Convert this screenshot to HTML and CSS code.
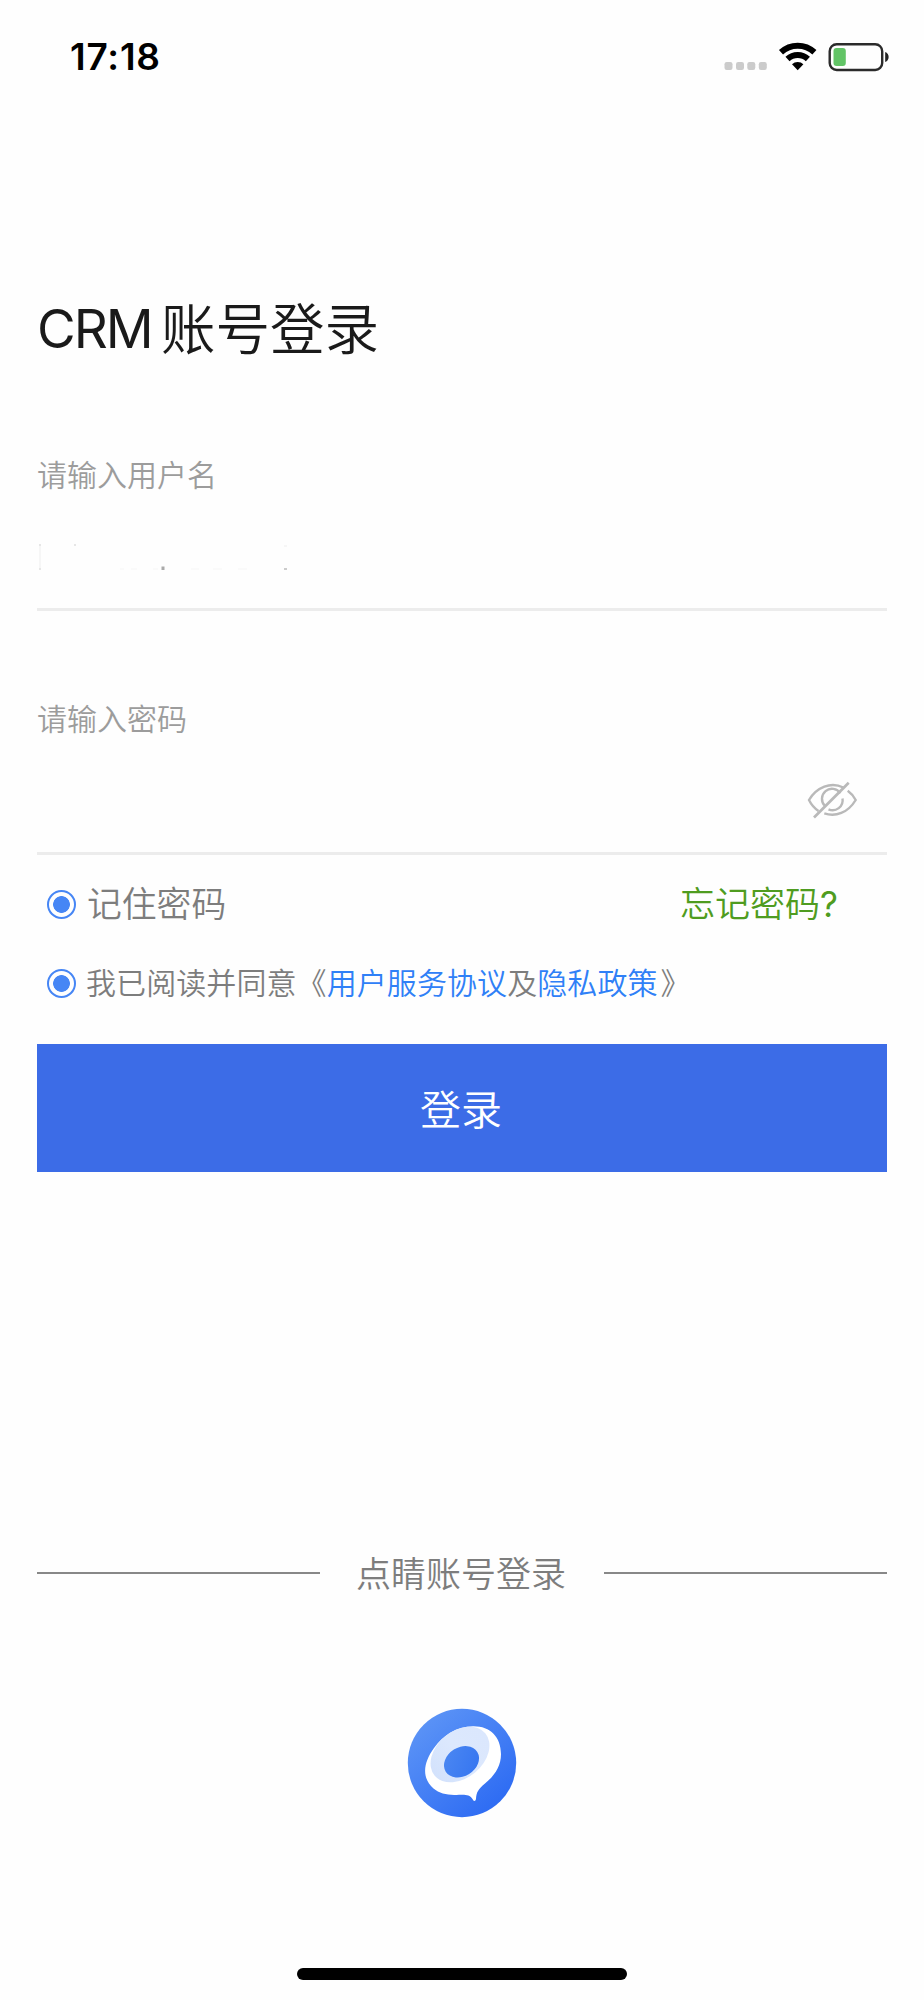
FILE: index.html
```html
<!DOCTYPE html>
<html lang="zh-CN">
<head>
<meta charset="utf-8">
<meta name="viewport" content="width=device-width, initial-scale=1">
<title>CRM账号登录</title>
<link rel="stylesheet" href="styles.css">
</head>
<body>
<div class="screen">
  <header class="status">
    <span class="time">17:18</span>
    <svg class="status-icons" width="170" height="40" viewBox="0 0 170 40">
      <g fill="#cbcbcb">
        <rect x="4.5" y="22" width="8" height="8" rx="2.2"/>
        <rect x="16" y="22" width="8" height="8" rx="2.2"/>
        <rect x="27.3" y="22" width="8" height="8" rx="2.2"/>
        <rect x="38.8" y="22" width="8" height="8" rx="2.2"/>
      </g>
      <g fill="none" stroke="#000" stroke-width="6">
        <path d="M61 12.300a24.500 24.500 0 0 1 33.400 0"/>
        <path d="M67.500 19a15 15 0 0 1 20.400 0"/>
      </g>
      <path d="M72 24.300a8 8 0 0 1 11.400 0L77.700 30.200z"/>
      <rect x="109.700" y="4.200" width="52.500" height="25.800" rx="7" fill="none" stroke="#2b2b2b" stroke-width="2.400"/>
      <rect x="113.500" y="8" width="12.300" height="18" rx="3" fill="#62c466"/>
      <path d="M165.200 12c4.600 1.300 4.600 8.700 0 10z" fill="#222"/>
    </svg>
  </header>

  <main class="login">
    <h1 class="title"><span class="latin">CRM</span><span>账号登录</span></h1>

    <section class="field">
      <label class="label">请输入用户名</label>
      <div class="value">
        <svg width="270" height="34" viewBox="0 0 270 34">
          <path d="M3 2v26" stroke="#f6f6f6" stroke-width="2"/>
          <g fill="#e6e6e6">
            <rect x="2" y="2" width="2" height="2"/><rect x="37" y="2" width="2" height="2"/>
            <rect x="2" y="26" width="2" height="2"/>
          </g>
          <path d="M83 27h4m7 0h6m16 0h5m33 0h8m14 0h9m16 0h9" stroke="#fafafa" stroke-width="2"/>
          <path d="M247 4h3" stroke="#f6f6f6" stroke-width="2"/>
          <rect x="124.500" y="24.500" width="3" height="3.500" fill="#aaa"/>
          <rect x="247" y="26" width="3" height="2" fill="#ccc"/>
        </svg>
      </div>
    </section>

    <section class="field second">
      <label class="label">请输入密码</label>
      <div class="value password">
        <svg class="eye" width="50" height="38" viewBox="0 0 50 38" fill="none" stroke="#b9b9b9" stroke-width="2.400">
          <path d="M36.300 6.500C24 .2 9.500 6.200 2 19c2.300 4.700 5.500 8.300 9.500 11"/>
          <path d="M40.700 9.700c3.700 2.600 6.200 5.900 8 9.300C41 31.800 28.500 36.300 17.300 32.400"/>
          <path d="M33.300 12.300A10 10 0 1 0 18 25"/>
          <path d="M35.500 17.500A10 10 0 0 1 21.500 28.300"/>
          <path d="M41.700 1.800 7 36.500" stroke-width="2.700"/>
        </svg>
      </div>
    </section>

    <div class="option remember">
      <span class="radio"></span>
      <span class="remember-text">记住密码</span>
      <a class="forgot">忘记密码<span class="mark">?</span></a>
    </div>
    <div class="option agree">
      <span class="radio"></span>
      <span class="agree-text">我已阅读并同意《<a class="link">用户服务协议</a>及<a class="link">隐私政策</a><span class="close">》</span></span>
    </div>

    <button class="submit" type="button">登录</button>
  </main>

  <section class="other">
    <div class="divider"><span>点睛账号登录</span></div>
    <svg class="logo" width="110" height="110" viewBox="0 0 110 110">
      <defs>
        <linearGradient id="disc" x1=".15" y1=".1" x2=".85" y2=".9">
          <stop offset="0" stop-color="#5b93f6"/><stop offset="1" stop-color="#2d6bf3"/>
        </linearGradient>
        <linearGradient id="inner" x1="0" y1=".5" x2="1" y2=".5">
          <stop offset="0" stop-color="#d3e2fc"/><stop offset=".5" stop-color="#dce8fd"/><stop offset="1" stop-color="#dbe7fd"/>
        </linearGradient>
        <linearGradient id="core" x1="0" y1="0" x2="1" y2="1">
          <stop offset="0" stop-color="#4c88f2"/><stop offset="1" stop-color="#3474f0"/>
        </linearGradient>
      </defs>
      <circle cx="55" cy="55" r="54.200" fill="url(#disc)"/>
      <path d="M66 18.300C83 18 94 29 94 46C94 59 87 68 78 75.500C71 81.500 69.500 84 69 91C68.500 93.500 66.500 93.500 65.500 91C62.500 86.500 59 86.500 52 86.700C42 87.500 33 86 26.500 80.500C14.500 70 16 55 27 40C36.500 27 50 18.600 66 18.300Z" fill="#fff"/>
      <ellipse cx="53" cy="46.500" rx="33" ry="23.500" transform="rotate(-40 53 46.500)" fill="url(#inner)"/>
      <ellipse cx="54.500" cy="53.800" rx="18.600" ry="14.400" transform="rotate(-32 54.500 53.800)" fill="url(#core)"/>
    </svg>
  </section>
  <div class="home"></div>
</div>
</body>
</html>
```
FILE: styles.css
```css
* { box-sizing: border-box; }
body {
  margin: 0;
  background: #fefefe;
  font-family: Inter, "Noto Sans CJK SC", sans-serif;
}
.screen {
  width: 924px;
  height: 2000px;
  display: flex;
  flex-direction: column;
}
.status {
  height: 114px;
  padding: 40px 34px 0 70px;
  display: flex;
  justify-content: space-between;
  align-items: flex-start;
}
.time {
  font-size: 37px;
  line-height: 34px;
  font-weight: 600;
  letter-spacing: .8px;
  color: #000;
}
.status-icons { display: block; }
.login { padding: 0 37px; }
.title {
  height: 80px;
  margin: 175px 0 0;
  display: flex;
  align-items: center;
  font-size: 54.500px;
  line-height: 80px;
  font-weight: 350;
  color: #1a1a1a;
}
.latin {
  width: 124px;
  font-size: 53px;
  font-weight: 400;
  letter-spacing: -2px;
}
.field {
  height: 155px;
  margin-top: 87px;
  border-bottom: 3px solid #ececec;
}
.second { margin-top: 89px; }
.label {
  display: block;
  height: 40px;
  font-size: 30px;
  line-height: 39px;
  font-weight: 350;
  color: #9c9c9c;
}
.value { height: 112px; padding-top: 46px; }
.value svg { display: block; }
.password {
  display: flex;
  justify-content: flex-end;
  padding: 41px 30px 0 0;
}
.option {
  display: flex;
  align-items: center;
  padding-left: 10px;
  color: #7d7d7d;
  font-weight: 350;
}
.remember { height: 80px; margin-top: 9px; }
.agree { height: 78px; }
.radio {
  width: 29px;
  height: 29px;
  flex: none;
  border: 2px solid #4686f5;
  border-radius: 50%;
  background: radial-gradient(circle, #4686f5 0 8px, transparent 8.700px);
}
.remember-text {
  margin-left: 11px;
  padding-bottom: 4px;
  font-size: 34.800px;
}
.agree-text {
  margin-left: 10px;
  padding-bottom: 5px;
  font-size: 30px;
  letter-spacing: .08px;
  white-space: nowrap;
}
.close { margin-left: 3px; }
.forgot {
  margin: 0 49px 0 auto;
  padding-bottom: 6px;
  font-size: 35px;
  color: #4f9c20;
}
.mark { font-weight: 400; }
.link { color: #2f80f7; }
.submit {
  display: block;
  width: 850px;
  height: 128px;
  margin-top: 22px;
  padding: 0 2px 2px 0;
  border: 0;
  background: #3c6ce7;
  color: #fff;
  font-family: inherit;
  font-size: 41px;
  font-weight: 350;
}
.other {
  flex: 1;
  padding: 366px 37px 0;
}
.divider {
  height: 70px;
  display: flex;
  align-items: center;
  font-size: 35px;
  font-weight: 350;
  color: #7d7d7d;
}
.divider::before,
.divider::after {
  content: "";
  flex: none;
  width: 283px;
  height: 2px;
  background: #888;
}
.divider span {
  flex: 1;
  padding: 0 2px 3px 0;
  text-align: center;
  white-space: nowrap;
}
.logo { display: block; margin: 100px auto 0; }
.home {
  width: 330px;
  height: 12px;
  margin: 0 auto 20px;
  border-radius: 6px;
  background: #000;
}
```
